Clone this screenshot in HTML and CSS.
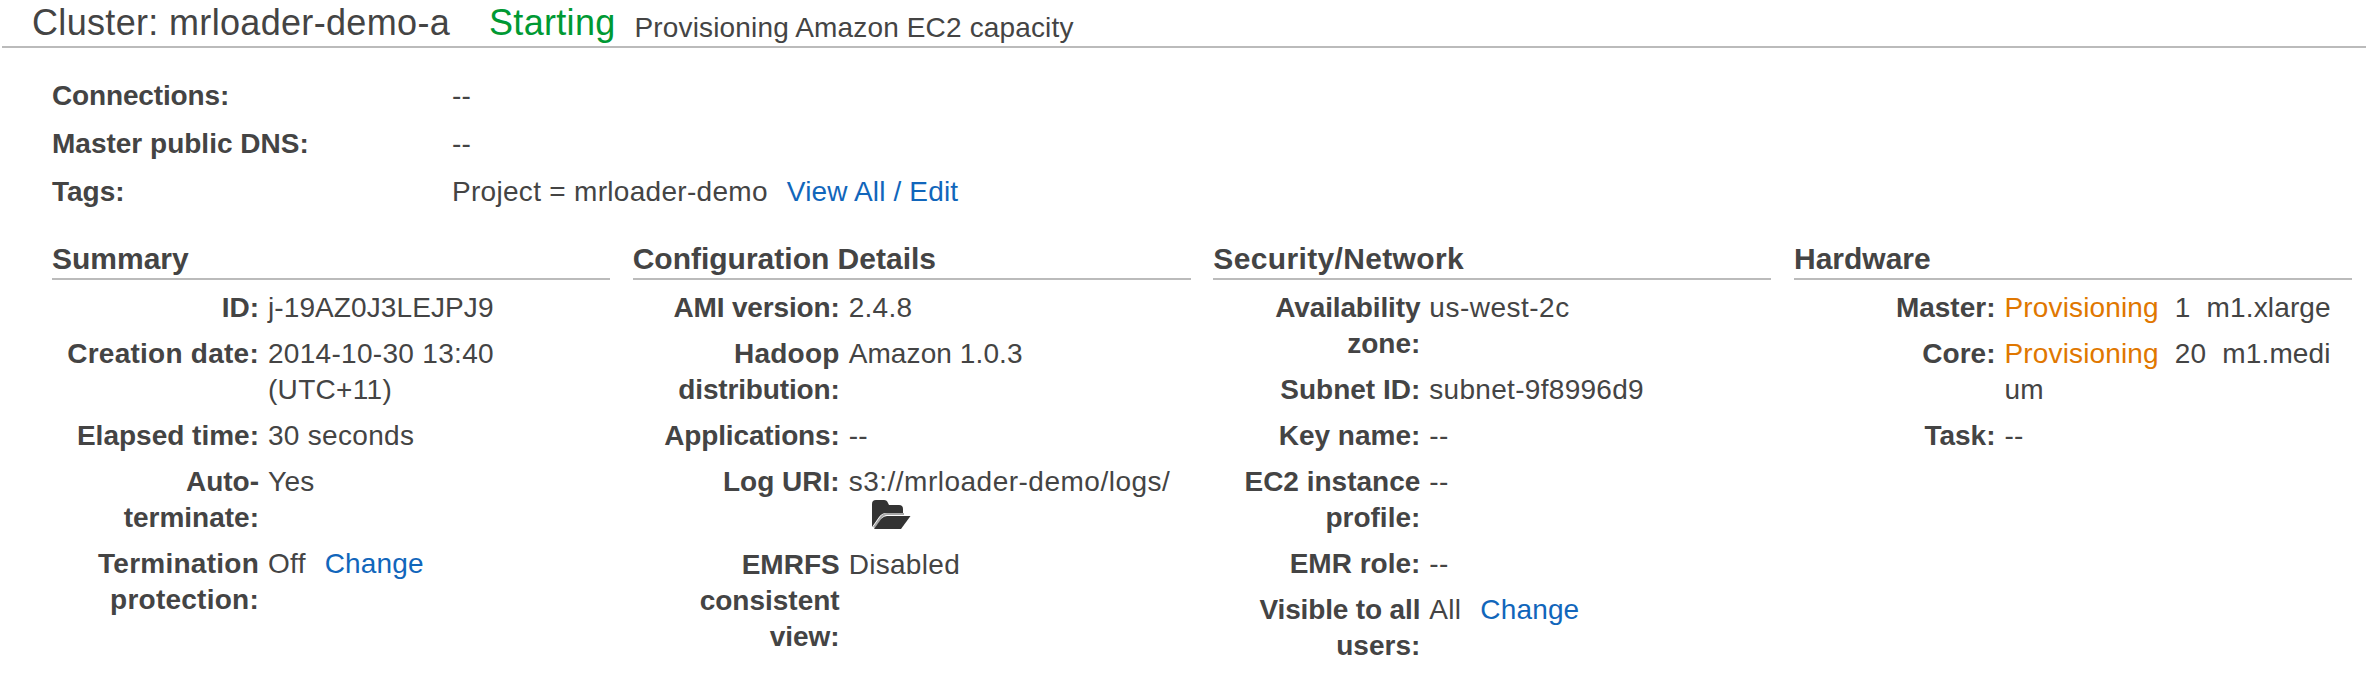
FILE: index.html
```html
<!DOCTYPE html>
<html lang="en">
<head>
<meta charset="utf-8">
<title>Cluster: mrloader-demo-a</title>
<link rel="stylesheet" href="styles.css">
</head>
<body>
<header class="header">
  <h1 class="title">Cluster: mrloader-demo-a</h1>
  <span class="state">Starting</span>
  <span class="reason">Provisioning Amazon EC2 capacity</span>
</header>
<main class="main">
  <dl class="overview">
    <dt class="narrow">Connections:</dt><dd>--</dd>
    <dt>Master public DNS:</dt><dd>--</dd>
    <dt>Tags:</dt><dd>Project = mrloader-demo<a class="link tag-link">View All / Edit</a></dd>
  </dl>
  <div class="columns">
    <section>
      <h2>Summary</h2>
      <dl class="details">
        <dt>ID:</dt><dd class="tight">j-19AZ0J3LEJPJ9</dd>
        <dt class="wide">Creation date:</dt><dd>2014-10-30 13:40<br>(UTC+11)</dd>
        <dt>Elapsed time:</dt><dd>30 seconds</dd>
        <dt>Auto-<br>terminate:</dt><dd>Yes</dd>
        <dt class="wide">Termination<br>protection:</dt><dd>Off<a class="link">Change</a></dd>
      </dl>
    </section>
    <section>
      <h2>Configuration Details</h2>
      <dl class="details">
        <dt class="narrow">AMI version:</dt><dd>2.4.8</dd>
        <dt><span class="wide">Hadoop</span><br><span class="narrow">distribution:</span></dt><dd class="tight">Amazon 1.0.3</dd>
        <dt class="narrow">Applications:</dt><dd>--</dd>
        <dt>Log URI:</dt><dd class="uri">s3://mrloader-demo/logs/
          <svg class="folder" viewBox="0 0 39 29" width="39" height="29"><path fill="#333" d="M0 27V4Q0 0 4 0H12Q15 0 16 3L17 5H27Q31 5 31 9V13H14Q10 13 7 17Z"/><path fill="#a8a8a8" d="M1 27L8 17Q11 13 15 13H32V15H15Q12 15 9 19L3 28Z"/><path fill="#333" d="M2 29L9 19Q12 16 15 16H38.500L29 29Z"/></svg></dd>
        <dt>EMRFS<br>consistent<br>view:</dt><dd>Disabled</dd>
      </dl>
    </section>
    <section>
      <h2 class="wide">Security/Network</h2>
      <dl class="details">
        <dt><span class="narrow">Availability</span><br>zone:</dt><dd class="uri">us-west-2c</dd>
        <dt>Subnet ID:</dt><dd>subnet-9f8996d9</dd>
        <dt>Key name:</dt><dd>--</dd>
        <dt>EC2 instance<br>profile:</dt><dd>--</dd>
        <dt>EMR role:</dt><dd>--</dd>
        <dt><span class="narrow">Visible to all</span><br>users:</dt><dd>All<a class="link">Change</a></dd>
      </dl>
    </section>
    <section>
      <h2>Hardware</h2>
      <dl class="details hardware">
        <dt>Master:</dt><dd><span class="pending">Provisioning</span><span class="count">1</span>m1.xlarge</dd>
        <dt>Core:</dt><dd><span class="pending">Provisioning</span><span class="count">20</span>m1.medi<br>um</dd>
        <dt>Task:</dt><dd>--</dd>
      </dl>
    </section>
  </div>
</main>
</body>
</html>
```
FILE: styles.css
```css
* { box-sizing: border-box; margin: 0; padding: 0; }
body {
  background: #fff;
  color: #444;
  font: 28px/36px "Liberation Sans", Arial, sans-serif;
  letter-spacing: 0.3px;
}
.header {
  display: flex;
  align-items: baseline;
  height: 48px;
  margin-left: 2px;
  padding-left: 30px;
  border-bottom: 2px solid #bbb;
  white-space: nowrap;
}
.title, .state { font-size: 36px; font-weight: 400; line-height: 46px; }
.title { letter-spacing: 0.33px; }
.state { margin-left: 39px; color: #093; }
.reason { margin: 2px 0 0 19px; position: relative; top: 2px; letter-spacing: 0.15px; }
.main { padding: 30px 14px 0 52px; }
.overview {
  display: grid;
  grid-template-columns: 400px 1fr;
  row-gap: 12px;
}
dt { font-weight: 700; letter-spacing: 0; }
.wide { letter-spacing: 0.25px; }
.narrow { letter-spacing: -0.15px; }
.link { margin-left: 19px; color: #1166bb; letter-spacing: 0.15px; }
.columns {
  display: grid;
  grid-template-columns: repeat(4, 558px);
  column-gap: 22.67px;
  padding-top: 30px;
}
h2 {
  height: 40px;
  padding-top: 1px;
  border-bottom: 2px solid #bbb;
  font-size: 30px;
  letter-spacing: 0;
}
h2.wide { letter-spacing: 0.35px; }
.details {
  display: grid;
  grid-template-columns: 207px 1fr;
  gap: 10px 9px;
  padding-top: 10px;
  white-space: nowrap;
}
.details dt { text-align: right; }
.hardware { grid-template-columns: 201.500px 1fr; letter-spacing: 0.15px; }
.tight { letter-spacing: 0.1px; }
.uri { letter-spacing: 0.500px; }
.folder { display: block; margin: 0 0 8px 23px; }
.pending { color: #e07700; }
.count { margin: 0 16px; }
```
